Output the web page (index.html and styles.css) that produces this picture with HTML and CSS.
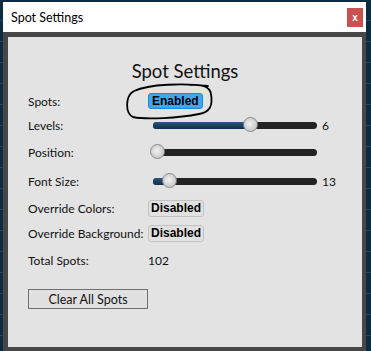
FILE: index.html
```html
<!DOCTYPE html>
<html lang="en">
<head>
    <meta charset="UTF-8">
    <meta name="viewport" content="width=device-width, initial-scale=1.0">
    <title>Spot Settings</title>
    <link rel="stylesheet" href="styles.css">
</head>
<body>

<div class="window">
    <div class="titlebar">
        <span class="title">Spot Settings</span>
        <button class="close">x</button>
    </div>
    <div class="frame">
        <div class="panel">
            <h2 class="heading">Spot Settings</h2>

            <div class="row">
                <span class="label">Spots:</span>
                <span class="toggle-wrap">
                    <button class="toggle on">Enabled</button>
                    <svg class="scribble" width="94" height="40" viewBox="0 0 94 40">
                        <path d="M84 4 C60 1, 25 2, 10 9 C1 14, 1 31, 9 35 C22 38, 55 36, 75 32 C86 30, 89 24, 87 12 C86 5, 80 2, 66 3" />
                    </svg>
                </span>
            </div>

            <div class="row">
                <span class="label">Levels:</span>
                <div class="slider">
                    <div class="fill" style="width: 97px"></div>
                    <div class="thumb" style="left: 89.5px"></div>
                </div>
                <span class="value">6</span>
            </div>

            <div class="row row-30">
                <span class="label">Position:</span>
                <div class="slider">
                    <div class="thumb" style="left: -3.5px"></div>
                </div>
                <span class="value"></span>
            </div>

            <div class="row row-28">
                <span class="label">Font Size:</span>
                <div class="slider">
                    <div class="fill" style="width: 16px"></div>
                    <div class="thumb" style="left: 8.5px"></div>
                </div>
                <span class="value">13</span>
            </div>

            <div class="row row-26">
                <span class="label">Override Colors:</span>
                <span><button class="toggle">Disabled</button></span>
            </div>

            <div class="row">
                <span class="label">Override Background:</span>
                <span><button class="toggle">Disabled</button></span>
            </div>

            <div class="row row-30">
                <span class="label">Total Spots:</span>
                <span class="total">102</span>
            </div>

            <button class="clear">Clear All Spots</button>
        </div>
    </div>
</div>

</body>
</html>
```

FILE: styles.css
```css
body {
    margin: 0;
    height: 351px;
    overflow: hidden;
    font-family: Lato, "Open Sans", sans-serif;
    background-color: #0e2b40;
    background-image: repeating-linear-gradient(180deg, transparent 0 20px, #1f4963 20px 21px);
}
.window {
    margin: 2px 0 0 3px;
    width: 363px;
}
.titlebar {
    height: 30px;
    background: #fff;
    display: flex;
    align-items: center;
    justify-content: space-between;
}
.title {
    padding-left: 8px;
    font-size: 12.5px;
    color: #000;
}
.close {
    width: 16px;
    height: 19px;
    margin-right: 3px;
    padding: 0;
    border: none;
    background: #c9514f;
    color: #fff;
    font-family: "Liberation Sans", Arial, sans-serif;
    font-weight: bold;
    font-size: 10px;
}
.frame {
    background: #474747;
    padding: 5px 4px 4px 5px;
}
.panel {
    height: 310px;
    box-sizing: border-box;
    background: #e3e3e3;
    padding: 22px 0 0 20px;
    font-size: 12px;
    color: #111;
}
.heading {
    margin: 0 0 6px -20px;
    text-align: center;
    font-weight: normal;
    font-size: 18.5px;
    line-height: 24px;
    color: #111;
}
.row {
    height: 24px;
    display: grid;
    grid-template-columns: 120px 169px auto;
    align-items: center;
    white-space: nowrap;
}
.row-30 {
    height: 30px;
}
.row-28 {
    height: 28px;
}
.row-26 {
    height: 26px;
}
.toggle-wrap {
    position: relative;
}
.toggle {
    height: 17px;
    padding: 0 2px;
    border: 1px solid #c2c2c2;
    border-radius: 3px;
    background: #e1e1e1;
    font-family: "Liberation Sans", Arial, sans-serif;
    font-weight: bold;
    font-size: 12px;
    line-height: 15px;
    color: #000;
    vertical-align: middle;
}
.toggle.on {
    height: 16px;
    padding: 0 3px;
    background: #3da7f2;
    border-color: #2285d6;
}
.scribble {
    position: absolute;
    left: -24px;
    top: -11px;
    overflow: visible;
}
.scribble path {
    fill: none;
    stroke: #000;
    stroke-width: 1.8;
    stroke-linecap: round;
}
.slider {
    position: relative;
    margin-left: 5px;
    width: 164px;
    height: 7px;
    border-radius: 4px;
    background: #222;
}
.fill {
    height: 100%;
    border-radius: 4px 0 0 4px;
    background: linear-gradient(180deg, #2a5782, #0f2e4e);
}
.thumb {
    position: absolute;
    top: -5px;
    width: 15px;
    height: 15px;
    box-sizing: border-box;
    border: 1px solid #8a8a8a;
    border-radius: 50%;
    background: radial-gradient(circle at 45% 45%, #f2f2f2, #c9c9c9 70%, #b5b5b5);
}
.value {
    padding-left: 5px;
}
.clear {
    margin-top: 14px;
    width: 120px;
    height: 20px;
    padding: 0;
    border: 1px solid #707070;
    background: #e1e1e1;
    font-family: Lato, "Open Sans", sans-serif;
    font-size: 12.5px;
    color: #111;
}
```
